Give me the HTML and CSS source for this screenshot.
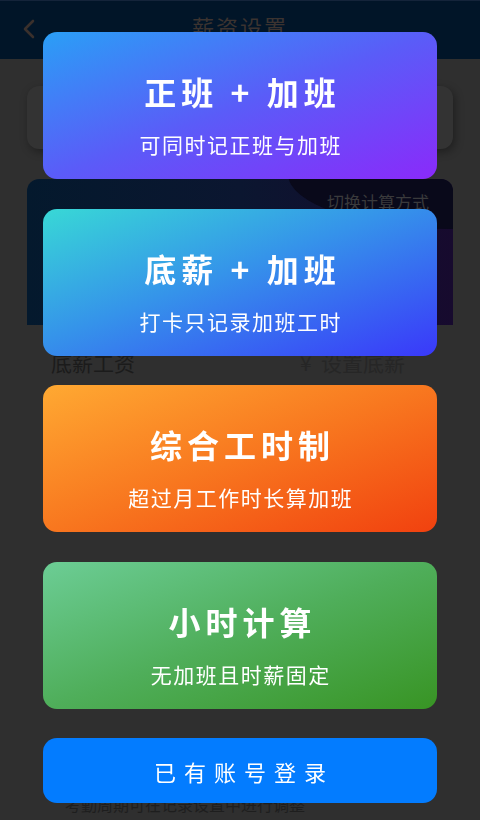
FILE: index.html
```html
<!DOCTYPE html>
<html lang="zh-CN">
<head>
<meta charset="utf-8">
<title>薪资设置</title>
<link rel="stylesheet" href="styles.css">
</head>
<body>
<div class="page">
  <header class="header">
    <svg class="back" width="14" height="20" viewBox="0 0 14 20"><path d="M11 2 L3 10 L11 18" fill="none" stroke="#3a302c" stroke-width="2.6" stroke-linecap="round" stroke-linejoin="round"/></svg>
    <h1 class="header-title">薪资设置</h1>
    <span class="header-spacer"></span>
  </header>
  <main class="content">
    <div class="summary-card"></div>
    <div class="mode-card">
      <span class="mode-name">正班 + 加班</span>
      <span class="mode-switch">切换计算方式</span>
    </div>
    <div class="row">
      <span class="row-label">底薪工资</span>
      <span class="row-value">¥&nbsp;&nbsp;设置底薪</span>
    </div>
    <p class="note">考勤周期可在记录设置中进行调整</p>
  </main>
</div>

<div class="overlay">
  <div class="choice choice-blue">
    <div class="choice-title">正班 + 加班</div>
    <div class="choice-sub">可同时记正班与加班</div>
  </div>
  <div class="choice choice-cyan">
    <div class="choice-title">底薪 + 加班</div>
    <div class="choice-sub">打卡只记录加班工时</div>
  </div>
  <div class="choice choice-orange">
    <div class="choice-title">综合工时制</div>
    <div class="choice-sub">超过月工作时长算加班</div>
  </div>
  <div class="choice choice-green">
    <div class="choice-title">小时计算</div>
    <div class="choice-sub">无加班且时薪固定</div>
  </div>
  <button class="login">已有账号登录</button>
</div>
</body>
</html>
```

FILE: styles.css
```css
* { box-sizing: border-box; }
html, body {
  margin: 0;
  padding: 0;
  width: 480px;
  height: 820px;
  overflow: hidden;
  background: #2f2f2f;
  font-family: "Noto Sans CJK SC", "Noto Sans", sans-serif;
}
.page {
  display: flex;
  flex-direction: column;
  height: 820px;
}
.header {
  height: 59px;
  background: #011528;
  border-top: 1px solid #14243a;
  display: grid;
  grid-template-columns: 60px 1fr 60px;
  align-items: center;
}
.back { margin-left: 22px; margin-top: -2px; }
.header-title {
  margin: 0;
  text-align: center;
  font-size: 22px;
  font-weight: 400;
  letter-spacing: 2px;
  color: #3b3330;
  line-height: 30px;
  margin-top: -8px;
}
.content {
  padding: 0 27px;
  display: flex;
  flex-direction: column;
}
.summary-card {
  margin-top: 27px;
  height: 63px;
  border-radius: 12px;
  background: #333333;
  box-shadow: 2px 3px 8px rgba(0,0,0,0.35);
}
.mode-card {
  position: relative;
  margin-top: 30px;
  height: 146px;
  border-radius: 12px 12px 0 0;
  background: linear-gradient(90deg, #04192d 0%, #0b1630 50%, #170a2e 100%);
  overflow: hidden;
  display: flex;
  justify-content: space-between;
  align-items: flex-start;
  padding: 12px 24px 0 21px;
}
.mode-card::before {
  content: "";
  position: absolute;
  left: 261px;
  top: -60px;
  width: 330px;
  height: 110px;
  border-radius: 50%;
  background: #09091a;
}
.mode-name {
  position: relative;
  font-size: 26px;
  font-weight: 700;
  color: #23283a;
  letter-spacing: 4px;
  margin-top: 12px;
}
.mode-switch {
  position: relative;
  font-size: 17px;
  color: #3a3a3c;
  line-height: 22px;
}
.row {
  height: 74px;
  display: flex;
  justify-content: space-between;
  align-items: center;
  padding: 0 48px 0 24px;
  font-size: 21px;
}
.row-label { color: #1b1b1b; }
.row-value { color: #262626; }
.note {
  margin: 395px 0 0 38px;
  font-size: 16px;
  line-height: 20px;
  color: #1e1e1e;
}

.overlay {
  position: fixed;
  inset: 0;
  display: flex;
  flex-direction: column;
  gap: 29.5px;
  padding: 32px 43px 0;
}
.choice {
  height: 147px;
  border-radius: 14px;
  color: #fff;
  text-align: center;
  padding-top: 38px;
  flex: none;
}
.choice-title {
  font-size: 32px;
  font-weight: 700;
  line-height: 42px;
  letter-spacing: 5px;
  padding-left: 5px;
}
.choice-sub {
  margin-top: 18px;
  font-size: 21px;
  line-height: 28px;
  letter-spacing: 1.5px;
  padding-left: 1.5px;
}
.choice-blue { background: linear-gradient(to bottom right, #2a9ff6, #5a5cf8 50%, #8a2afa); }
.choice-cyan { background: linear-gradient(to bottom right, #38d8d6, #3593ea 45%, #3a38fa); }
.choice-orange { background: linear-gradient(to bottom right, #ffa932, #f8771f 50%, #f1410f); }
.choice-green { background: linear-gradient(to bottom right, #6ccd95, #4fae5a 50%, #389424); }
.login {
  height: 65px;
  border: none;
  border-radius: 14px;
  background: #037cff;
  color: #fff;
  font-family: inherit;
  font-size: 22px;
  letter-spacing: 8px;
  padding: 0 0 0 8px;
  flex: none;
}
```
